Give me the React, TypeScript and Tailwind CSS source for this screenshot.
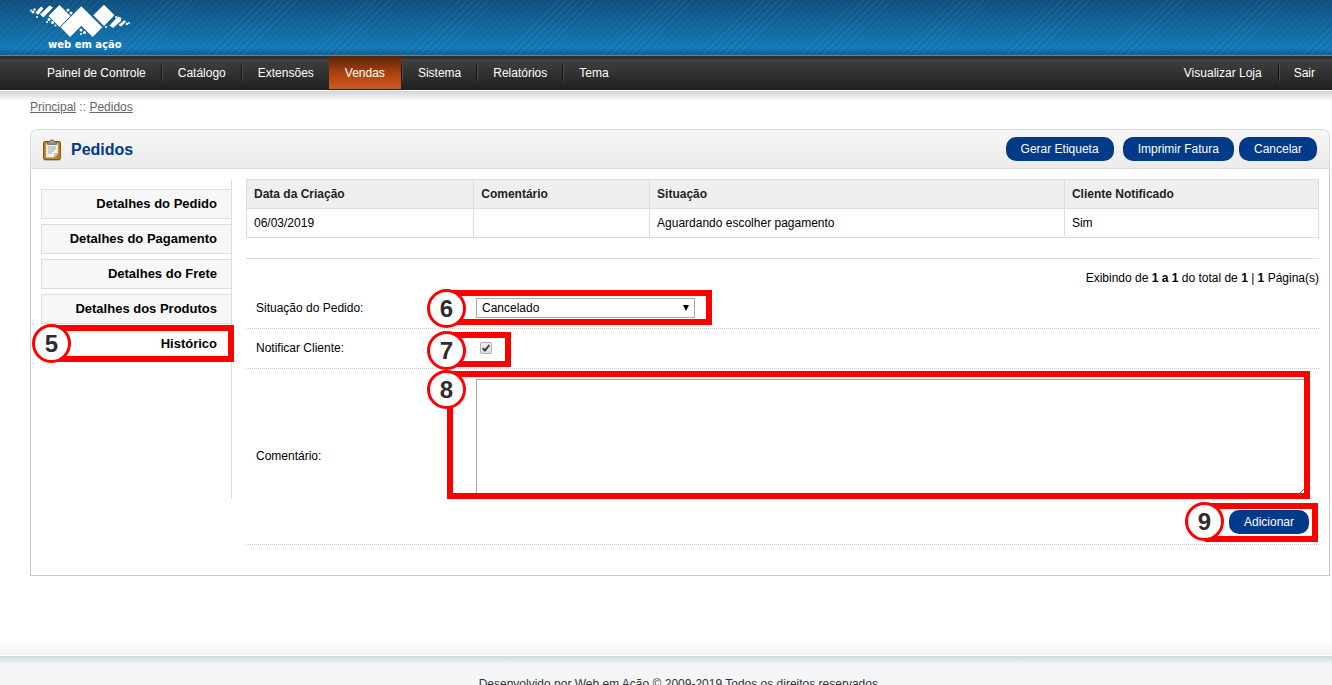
import { useState } from "react";

const menu = [
  { label: "Painel de Controle" },
  { label: "Catálogo" },
  { label: "Extensões" },
  { label: "Vendas", active: true },
  { label: "Sistema" },
  { label: "Relatórios" },
  { label: "Tema" },
];

const tabs = [
  "Detalhes do Pedido",
  "Detalhes do Pagamento",
  "Detalhes do Frete",
  "Detalhes dos Produtos",
  "Histórico",
];

const statuses = ["Cancelado", "Aguardando escolher pagamento", "Completo", "Enviado"];

const pill =
  "h-6 cursor-pointer rounded-[10px] bg-[#003a88] px-[15px] text-xs text-white hover:bg-[#002f6e]";

function Logo() {
  return (
    <svg width="100" height="46" viewBox="0 0 100 46" fill="#fff" role="img" aria-label="Web em Ação">
      <path d="M51.3 2.3 72.3 23.3 62.7 33 51.3 21.7 40 33 30.5 23.3Z" />
      <path d="M29.5 1 40.5 12 29.5 23 18.5 12Z" />
      <path d="M74 .7 84.5 11.3 74 22 63.3 11.3Z" />
      <path d="M19.5 1.500 23 3.500 13.500 13.500 10 10.500Z" />
      <path d="M11 2.500 13.500 4.500 8 11 5.500 8.500Z" />
      <path d="M88 12.500 91.500 14 90.500 17.500 83 24 79.500 21.500Z" />
      <path d="M94.500 16 96 18 91 22.500 88.500 21Z" />
      <circle cx="3" cy="8" r="1.500" />
      <circle cx="1" cy="6.500" r="1" />
      <circle cx="4.500" cy="5.500" r="1.200" />
      <circle cx="7" cy="13" r="1" />
      <circle cx="19" cy="15.500" r="1.500" />
      <circle cx="22.500" cy="18.500" r="1.500" />
      <circle cx="17" cy="18" r="1" />
      <circle cx="25.500" cy="21.500" r="1" />
      <circle cx="38" cy="6" r="1.500" />
      <circle cx="41" cy="9" r="1.500" />
      <circle cx="51" cy="26" r="1.500" />
      <circle cx="54.500" cy="28.500" r="1.500" />
      <circle cx="51" cy="30" r="1" />
      <circle cx="86" cy="13" r="1" />
      <circle cx="76" cy="23" r="1" />
      <circle cx="97" cy="20" r="1.200" />
      <circle cx="99" cy="19" r="1" />
      <text x="18" y="44" fontFamily="'DejaVu Sans', sans-serif" fontSize="10" fontWeight="700">
        web em ação
      </text>
    </svg>
  );
}

function ClipboardIcon() {
  return (
    <svg width="22" height="22" viewBox="0 0 22 22" aria-hidden="true">
      <ellipse cx="11" cy="21" rx="9" ry="1" fill="#bbb" />
      <rect x="2.500" y="2.500" width="17" height="18" rx="1.500" fill="#c17d11" stroke="#8f5902" />
      <path d="M5 4.500h12v10.500l-3.500 3.500H5Z" fill="#f4f4f2" stroke="#b5b5b0" strokeWidth=".6" />
      <path d="M7 8h8M7 10h8M7 12h6M7 14h4" stroke="#a3a59f" />
      <path d="M17 14.500h-3.500v4Z" fill="#d3d7cf" stroke="#888a85" strokeWidth=".5" />
      <path d="M6.500 5.500V3.500l2-1Q9 .8 11 .8t2.500 1.700l2 1v2Z" fill="#888a85" stroke="#666862" strokeWidth=".8" />
      <path d="M9.500 3h3" stroke="#c8cac5" />
    </svg>
  );
}

// Red outline with its step number, laid over the control it points at
function Step({ n, className }: { n: number; className: string }) {
  return (
    <div className={`pointer-events-none absolute z-10 border-6 border-[#ff0000] ${className}`}>
      <span className="absolute -left-[26px] -top-[7px] flex h-[39px] w-[39px] items-center justify-center rounded-full border-3 border-[#ff0000] bg-white text-2xl font-bold text-[#2d2d2d]">
        {n}
      </span>
    </div>
  );
}

function Separator() {
  return <span className="h-4 w-0.5 border-l border-[#111] bg-[#505050]" />;
}

function Header() {
  return (
    <header>
      <div className="border-b border-[#5887a8] bg-[repeating-linear-gradient(135deg,rgba(255,255,255,0.05)_0px,rgba(255,255,255,0.05)_1px,transparent_1px,transparent_5px),linear-gradient(#104f7e,#1379b6_48px,#0f608f)] pb-1 pl-[30px] pt-1">
        <a href="#inicio" className="block h-[47px] w-[100px]">
          <Logo />
        </a>
      </div>
      <nav className="flex h-[34px] justify-between border-b border-[#2b2027] bg-[linear-gradient(#303030_0px,#303030_3px,#414141_3px,#202020)] pl-[30px] text-xs text-white">
        <ul className="flex">
          {menu.map((item, i) => (
            <li
              key={item.label}
              className={`flex items-center ${
                item.active ? "bg-[linear-gradient(#54240c,#a13e0d_45%,#c04c14_75%,#c15d2c)] px-4" : "pr-[15px]"
              }`}
            >
              {i > 0 && !item.active && <Separator />}
              <a
                href="#menu"
                className={`py-2 ${i === 0 ? "pl-[17px]" : item.active ? "" : "pl-[15px]"}`}
              >
                {item.label}
              </a>
            </li>
          ))}
        </ul>
        <ul className="flex items-center">
          <li>
            <a href="#loja" className="px-4 py-2">Visualizar Loja</a>
          </li>
          <li className="flex items-center">
            <Separator />
            <a href="#sair" className="py-2 pl-[14px] pr-[17px]">Sair</a>
          </li>
        </ul>
      </nav>
    </header>
  );
}

function HistoryTable() {
  return (
    <table className="mb-5 w-full table-fixed border-collapse text-left text-xs">
      <colgroup>
        <col className="w-[21.2%]" />
        <col className="w-[16.4%]" />
        <col className="w-[38.7%]" />
        <col />
      </colgroup>
      <thead>
        <tr className="h-[29px] bg-[#efefef] text-[#222]">
          {["Data da Criação", "Comentário", "Situação", "Cliente Notificado"].map((h) => (
            <th key={h} className="border border-[#ddd] px-[7px] font-bold">
              {h}
            </th>
          ))}
        </tr>
      </thead>
      <tbody>
        <tr className="h-[29px]">
          <td className="border border-[#ddd] px-[7px]">06/03/2019</td>
          <td className="border border-[#ddd] px-[7px]" />
          <td className="border border-[#ddd] px-[7px]">Aguardando escolher pagamento</td>
          <td className="border border-[#ddd] px-[7px]">Sim</td>
        </tr>
      </tbody>
    </table>
  );
}

function HistoryForm() {
  const [status, setStatus] = useState(statuses[0]);
  const [notify, setNotify] = useState(true);
  const [comment, setComment] = useState("");

  return (
    <form onSubmit={(e) => e.preventDefault()}>
      <div className="relative flex h-10 items-center border-b border-dotted border-[#ccc] px-[10px] pb-0.5">
        <label htmlFor="status" className="w-[220px] shrink-0">Situação do Pedido:</label>
        <div className="relative">
          <select
            id="status"
            value={status}
            onChange={(e) => setStatus(e.target.value)}
            className="block h-5 w-[219px] appearance-none border border-[#a9a9a9] bg-white pl-[5px] pr-5 text-xs"
          >
            {statuses.map((s) => (
              <option key={s}>{s}</option>
            ))}
          </select>
          <svg className="pointer-events-none absolute right-[6px] top-[7px]" width="6" height="6" viewBox="0 0 6 6">
            <path d="M0 0h6L3 6Z" />
          </svg>
        </div>
        <Step n={6} className="left-[201px] top-px h-[35px] w-[265px]" />
      </div>

      <div className="relative flex h-10 items-center border-b border-dotted border-[#ccc] px-[10px] pb-0.5">
        <label htmlFor="notify" className="w-[220px] shrink-0">Notificar Cliente:</label>
        <div className="relative ml-1">
          <input
            id="notify"
            type="checkbox"
            checked={notify}
            onChange={(e) => setNotify(e.target.checked)}
            className="peer block h-3 w-3 appearance-none rounded-[2px] border border-[#b0b0b0] bg-linear-to-b from-[#eee] to-[#ddd]"
          />
          <svg
            className="pointer-events-none absolute inset-0 hidden peer-checked:block"
            width="12"
            height="12"
            viewBox="0 0 12 12"
            fill="none"
            stroke="#3c3c3c"
            strokeWidth="2"
          >
            <path d="M2.700 6.200 5 8.500 9.300 3" />
          </svg>
        </div>
        <Step n={7} className="left-[201px] top-[3px] h-[35px] w-16" />
      </div>

      <div className="relative flex items-center border-b border-dotted border-[#ccc] p-[10px]">
        <label htmlFor="comment" className="w-[220px] shrink-0 pb-0.5">Comentário:</label>
        <div className="grow">
          <textarea
            id="comment"
            value={comment}
            onChange={(e) => setComment(e.target.value)}
            className="block h-[116px] w-full border border-[#a9a9a9] bg-white p-0.5"
          />
          <div className="mt-[15px] flex justify-end">
            <div className="relative flex">
              <button type="submit" className={pill}>Adicionar</button>
              <Step n={9} className="-bottom-2 -left-6 -right-[9px] -top-[7px]" />
            </div>
          </div>
        </div>
        <Step n={8} className="left-[201px] right-[9px] top-0.5 h-32" />
      </div>
    </form>
  );
}

export default function App() {
  const [tab, setTab] = useState("Histórico");

  return (
    <div className="min-h-screen bg-white font-['Liberation_Sans',Arial,sans-serif] text-xs text-black">
      <Header />

      <main className="border-t border-white bg-[linear-gradient(#d2d2d2,#fff_10px)] pb-16 pl-[30px] pr-0.5">
        <div className="pb-[14px] pt-2 text-[#777]">
          <a href="#principal" className="text-[#666] underline">Principal</a>
          {" :: "}
          <a href="#pedidos" className="text-[#666] underline">Pedidos</a>
        </div>

        <div className="flex h-10 items-center justify-between rounded-t-[7px] border border-[#dbdbdb] bg-linear-to-b from-[#f7f7f7] to-[#ebebeb] pl-[10px] pr-3">
          <h1 className="flex items-center gap-2 pt-0.5 text-base font-bold text-[#003a88]">
            <ClipboardIcon />
            Pedidos
          </h1>
          <div className="flex">
            <button type="button" className={`mr-[9px] ${pill}`}>Gerar Etiqueta</button>
            <button type="button" className={`mr-[5px] ${pill}`}>Imprimir Fatura</button>
            <button type="button" className={pill}>Cancelar</button>
          </div>
        </div>

        <div className="flex items-start gap-[14px] border-x border-b border-[#ccc] p-[10px]">
          <div className="flex h-80 w-[191px] shrink-0 flex-col gap-[5px] border-r border-[#ddd] pt-[10px]">
            {tabs.map((t) => (
              <div key={t} className="relative">
                <button
                  type="button"
                  onClick={() => setTab(t)}
                  className={`block h-[30px] w-full cursor-pointer pr-[14px] text-right text-[13px] font-bold ${
                    t === tab ? "bg-white" : "border-y border-l border-[#ddd] bg-[#f7f7f7]"
                  }`}
                >
                  {t}
                </button>
                {t === "Histórico" && <Step n={5} className="-right-[3px] -top-1 left-[11px] h-[37px]" />}
              </div>
            ))}
          </div>

          <section className="mb-5 grow">
            <HistoryTable />
            <p className="h-[31px] border-t border-[#ddd] pt-[11px] text-right">
              Exibindo de <b>1 a 1</b> do total de <b>1</b> | <b>1</b> Página(s)
            </p>
            <HistoryForm />
          </section>
        </div>
      </main>

      <div className="h-4 border-b border-white bg-linear-to-b from-white to-[#f1f2f4]" />
      <footer className="bg-[linear-gradient(#ccd8dc,#f3f5f7_8px)] py-5 pl-7 text-center text-[#333]">
        Desenvolvido por Web em Ação © 2009-2019 Todos os direitos reservados.
      </footer>
    </div>
  );
}
